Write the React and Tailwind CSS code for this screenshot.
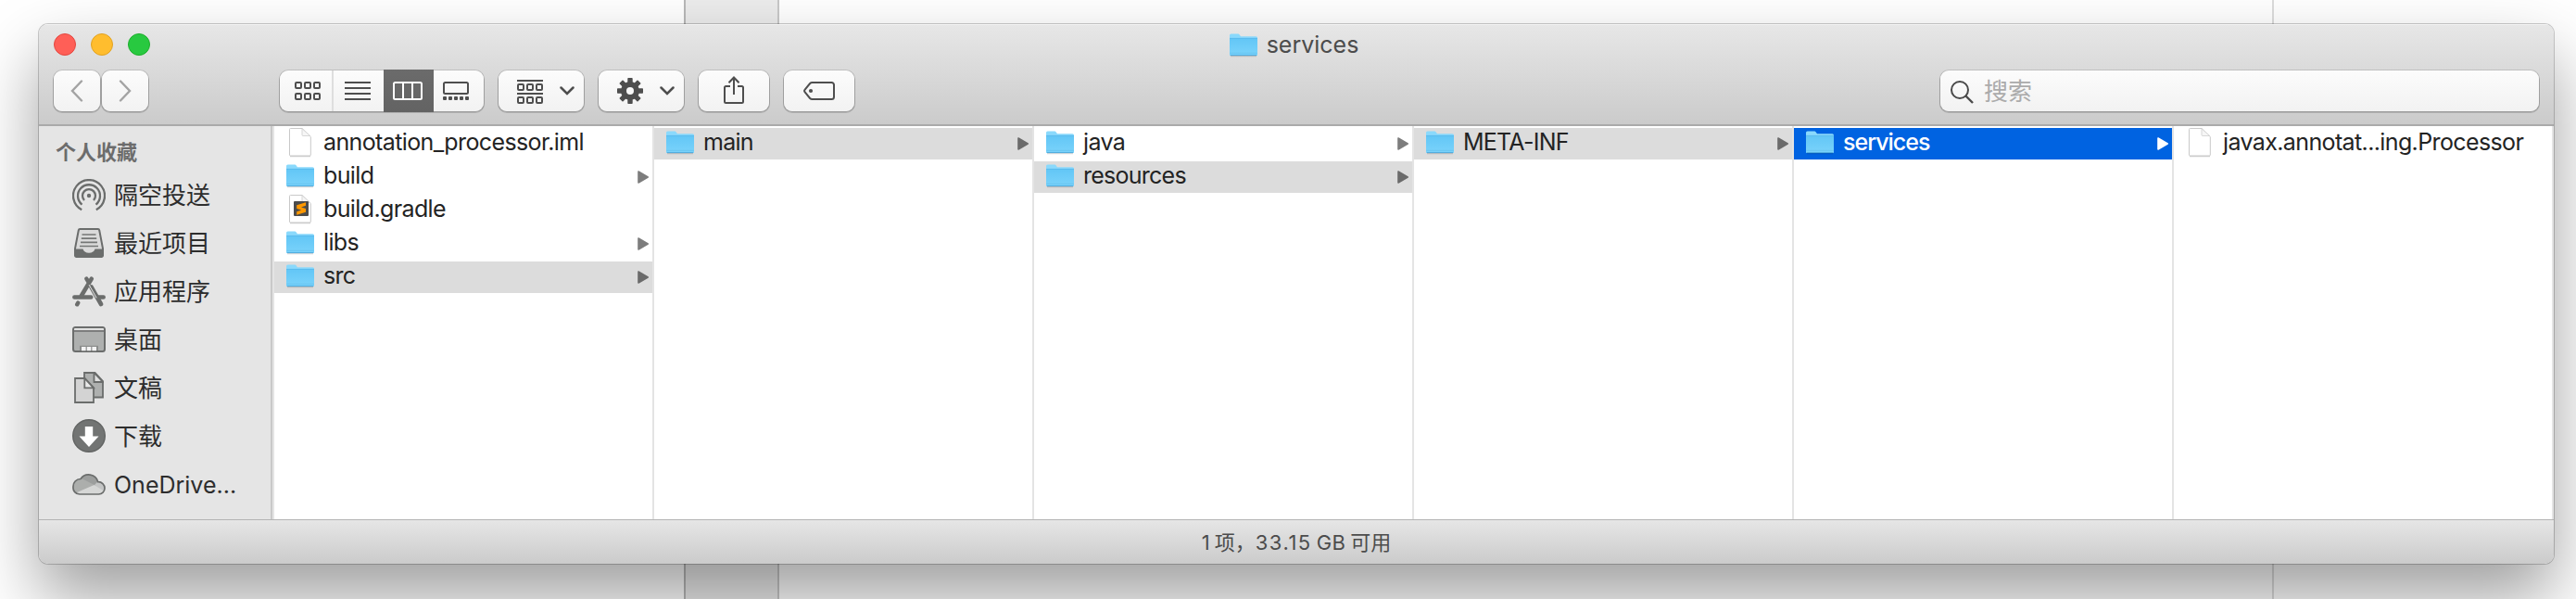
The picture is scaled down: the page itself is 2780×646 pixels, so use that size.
import React from "react";

const FONT =
  "font-['Inter','Noto_Sans_CJK_SC',sans-serif]";

/* ---------- file icons ---------- */

function Folder() {
  return (
    <svg width="32" height="27" viewBox="0 0 32 27" className="block shrink-0">
      <defs>
        <linearGradient id="folderFront" x1="0" y1="0" x2="0" y2="1">
          <stop offset="0" stopColor="#62c6f6" />
          <stop offset="1" stopColor="#7ad3fb" />
        </linearGradient>
      </defs>
      <path d="M2 25.6h28" stroke="#000" strokeOpacity="0.14" strokeWidth="1.4" />
      <path d="M1 3a1.6 1.6 0 0 1 1.6-1.6h7.2c.9 0 1.4.3 1.9 1l1.3 1.8h16.4A1.6 1.6 0 0 1 31 5.8V23.4A1.6 1.6 0 0 1 29.4 25H2.6A1.6 1.6 0 0 1 1 23.4z" fill="#8ad9fc" />
      <path d="M1 6.2h30V23.4A1.6 1.6 0 0 1 29.4 25H2.6A1.6 1.6 0 0 1 1 23.4z" fill="url(#folderFront)" />
      <path d="M1 6.4h30" stroke="#55b6ea" strokeWidth="0.8" />
      <path d="M1.2 22.3h29.6" stroke="#63bfee" strokeWidth="0.7" />
      <path d="M1.8 24.6h28.4" stroke="#4fa9dc" strokeWidth="1" />
    </svg>
  );
}

function FileIcon({ sublime }) {
  return (
    <svg width="26" height="33" viewBox="0 0 26 33" className="block shrink-0">
      <path d="M2 31.6h22" stroke="#000" strokeOpacity="0.18" strokeWidth="1.2" />
      <path d="M2.500 1.500h12.500L24.300 10.500V30a1 1 0 0 1-1 1H2.500a1 1 0 0 1-1-1V2.500a1 1 0 0 1 1-1z" fill="#fff" stroke="#c9c9c9" />
      <path d="M15 1.800V8.500a1 1 0 0 0 1 1h7.800z" fill="#f6f6f6" stroke="#d2d2d2" strokeWidth="0.9" />
      {sublime && (
        <>
          <rect x="6" y="8" width="16" height="16" rx="1" fill="#4c4c4c" />
          <path d="M19 9.200v3.600l-5 1.600 5 1.600v3.700L9.200 22.800v-3.600l5-1.600-5-1.600v-3.700z" fill="#ff9800" />
        </>
      )}
    </svg>
  );
}

function Triangle({ className }) {
  return (
    <svg width="12" height="14" viewBox="0 0 12 14" className={className}>
      <path d="M1 1v12L11.200 7z" fill="currentColor" stroke="currentColor" strokeWidth="1.6" strokeLinejoin="round" />
    </svg>
  );
}

/* ---------- toolbar icons ---------- */

function Squares({ y }) {
  return (
    <g fill="none" stroke="#4e4e4e" strokeWidth="2">
      <rect x="1" y={y} width="6" height="6" rx="1" />
      <rect x="11" y={y} width="6" height="6" rx="1" />
      <rect x="21" y={y} width="6" height="6" rx="1" />
    </g>
  );
}

function Chevron() {
  return (
    <svg width="16" height="10" viewBox="0 0 16 10">
      <path d="M1.500 1.500L8 8l6.500-6.500" fill="none" stroke="#4e4e4e" strokeWidth="2.5" strokeLinecap="round" />
    </svg>
  );
}

const BTN =
  "flex h-11 items-center rounded-[9px] bg-linear-to-b from-[#fcfcfc] to-[#f2f2f2] shadow-[0_0_0_1px_rgba(0,0,0,0.12),0_1px_0_1px_rgba(0,0,0,0.14)]";

function Toolbar() {
  return (
    <div className="flex h-11 items-center px-4">
      <div className="flex gap-0.5">
        <div className={`${BTN} w-[50px] justify-center`}>
          <svg width="14" height="24" viewBox="0 0 14 24">
            <path d="M12 1.500L2 12l10 10.500" fill="none" stroke="#a3a3a3" strokeWidth="2.4" strokeLinecap="round" />
          </svg>
        </div>
        <div className={`${BTN} w-[50px] justify-center`}>
          <svg width="14" height="24" viewBox="0 0 14 24">
            <path d="M2 1.500L12 12 2 22.500" fill="none" stroke="#a3a3a3" strokeWidth="2.4" strokeLinecap="round" />
          </svg>
        </div>
      </div>

      <div className={`${BTN} ml-[142px] w-[220px]`}>
        <div className="flex h-full w-[58px] items-center border-r-2 border-[#dedede] pl-4">
          <svg width="28" height="20" viewBox="0 0 28 20">
            <Squares y={1} />
            <Squares y={13} />
          </svg>
        </div>
        <div className="flex h-full w-[54px] items-center pl-3">
          <svg width="28" height="20" viewBox="0 0 28 20">
            <path d="M0 1h28M0 7h28M0 13h28M0 19h28" stroke="#4e4e4e" strokeWidth="2" />
          </svg>
        </div>
        <div className="flex h-[46px] w-[54px] shrink-0 items-center justify-center bg-linear-to-b from-[#6b6b6b] to-[#636363] pr-0.5">
          <svg width="32" height="20" viewBox="0 0 32 20">
            <rect x="1" y="1" width="30" height="18" rx="1.5" fill="none" stroke="#fff" strokeWidth="2" />
            <path d="M11 1v18M21 1v18" stroke="#fff" strokeWidth="2" />
          </svg>
        </div>
        <div className="flex h-full w-[54px] items-center pl-[10px]">
          <svg width="28" height="20" viewBox="0 0 28 20">
            <rect x="1" y="1" width="26" height="12" rx="1.5" fill="none" stroke="#4e4e4e" strokeWidth="2" />
            <g fill="#4e4e4e">
              <rect x="0" y="16" width="4" height="4" rx="1" />
              <rect x="6" y="16" width="4" height="4" rx="1" />
              <rect x="12" y="16" width="4" height="4" rx="1" />
              <rect x="18" y="16" width="4" height="4" rx="1" />
              <rect x="24" y="16" width="4" height="4" rx="1" />
            </g>
          </svg>
        </div>
      </div>

      <div className={`${BTN} ml-4 w-[92px] justify-between pr-[10px] pl-5`}>
        <svg width="28" height="26" viewBox="0 0 28 26" className="mt-0.5">
          <path d="M0 1h28M0 15h28" stroke="#4e4e4e" strokeWidth="2" />
          <Squares y={5} />
          <Squares y={19} />
        </svg>
        <Chevron />
      </div>

      <div className={`${BTN} ml-4 w-[92px] justify-between pr-[10px] pl-5`}>
        <svg width="28" height="28" viewBox="-14 -14 28 28">
          <g fill="#4e4e4e">
            {[0, 45, 90, 135].map((a) => (
              <rect key={a} x="-2.7" y="-14" width="5.4" height="28" rx="0.8" transform={`rotate(${a})`} />
            ))}
            <circle r="10" />
          </g>
          <circle r="4" fill="#f8f8f8" />
        </svg>
        <Chevron />
      </div>

      <div className={`${BTN} ml-4 w-[76px] justify-center pb-0.5`}>
        <svg width="22" height="30" viewBox="0 0 22 30" fill="none" stroke="#4e4e4e" strokeWidth="2">
          <path d="M7 11H2.500A1.500 1.500 0 0 0 1 12.500v15A1.500 1.500 0 0 0 2.500 29h17a1.500 1.500 0 0 0 1.500-1.500v-15a1.500 1.500 0 0 0-1.500-1.500H15" />
          <path d="M11 20V1.500M5.500 7.300L11 1.500l5.500 5.800" />
        </svg>
      </div>

      <div className={`${BTN} ml-4 w-[76px] justify-center`}>
        <svg width="34" height="20" viewBox="0 0 34 20">
          <path d="M9.500 1H30.500A2.500 2.500 0 0 1 33 3.500v13a2.500 2.500 0 0 1-2.500 2.500H9.500c-1 0-1.700-.3-2.400-1L1.700 11.400c-.8-.9-.8-1.900 0-2.800L7.100 2c.7-.7 1.400-1 2.400-1z" fill="none" stroke="#4e4e4e" strokeWidth="2" />
          <circle cx="8" cy="10" r="2.1" fill="#4e4e4e" />
        </svg>
      </div>

      <div className={`${BTN} ml-auto w-[646px] gap-[11px] pl-[10px]`}>
        <svg width="26" height="26" viewBox="0 0 26 26" className="mt-0.5">
          <circle cx="11" cy="11" r="9" fill="none" stroke="#4a4a4a" strokeWidth="2" />
          <path d="M17.500 17.500L25 25" stroke="#4a4a4a" strokeWidth="2.4" />
        </svg>
        <span className="pt-0.5 text-[26px] leading-none text-[#ababab]">搜索</span>
      </div>
    </div>
  );
}

/* ---------- sidebar ---------- */

function AirDropIcon() {
  return (
    <svg width="36" height="36" viewBox="0 0 36 36" fill="none" stroke="#6b6d6c" strokeWidth="2.3">
      <path d="M10.200 33.200A17 17 0 1 1 25.800 33.200" />
      <path d="M10.500 27.600A12 12 0 1 1 25.500 27.600" />
      <path d="M13 23A7 7 0 1 1 23 23" />
      <circle cx="18" cy="18" r="2.2" fill="#6b6d6c" stroke="none" />
    </svg>
  );
}

function RecentsIcon() {
  return (
    <svg width="32" height="32" viewBox="0 0 32 32" className="mb-0.5">
      <path d="M6.300 1h19.400a1.500 1.500 0 0 1 1.500 1.200L31 22v7.500a1.500 1.500 0 0 1-1.500 1.500h-27A1.500 1.500 0 0 1 1 29.500V22L4.800 2.200A1.500 1.500 0 0 1 6.300 1z" fill="#dadada" stroke="#6b6d6c" strokeWidth="2" />
      <path d="M1 22.500h8.500c.6 2.500 3 4.300 6.500 4.300s5.900-1.800 6.500-4.300H31V31H1z" fill="#6b6d6c" />
      <path d="M8.500 7h15M7.800 11.200h16.400M7 15.300h18M6 19.500h20" stroke="#757776" strokeWidth="1.7" />
    </svg>
  );
}

function AppsIcon() {
  return (
    <svg width="36" height="34" viewBox="0 0 36 34" fill="none" stroke="#6b6d6c" strokeLinecap="round" className="mb-0.5">
      <path d="M2.300 23.500h18" strokeWidth="4.4" />
      <path d="M28.500 23.500h5.200" strokeWidth="4.4" />
      <path d="M20.800 3.600L9.800 22" strokeWidth="4.6" />
      <path d="M6.200 29.600l-1 1.700" strokeWidth="4.4" />
      <path d="M15.300 3.600l1.900 3" strokeWidth="4.4" />
      <path d="M20.500 12.500L31 31" strokeWidth="4.6" />
      <path d="M18.300 10.500L26 24" stroke="#e6e6e6" strokeWidth="1" />
    </svg>
  );
}

function DesktopIcon() {
  return (
    <svg width="36" height="28" viewBox="0 0 36 28" className="mb-0.5">
      <rect x="1" y="1" width="34" height="26" rx="2.5" fill="#aeb0af" stroke="#6b6d6c" strokeWidth="2" />
      <path d="M2 4.200V3a1 1 0 0 1 1-1h30a1 1 0 0 1 1 1v1.200z" fill="#e2e2e2" />
      <path d="M1 4.900h34" stroke="#6b6d6c" strokeWidth="1.5" />
      <path d="M8 20.800h20V26H8z" fill="#8b8d8c" />
      <path d="M10 22h4.600v4.200H10zM15.800 22h4.400v4.200h-4.400zM21.400 22H26v4.200h-4.600z" fill="#f3f3f3" />
    </svg>
  );
}

function DocumentsIcon() {
  return (
    <svg width="32" height="34" viewBox="0 0 32 34" stroke="#6b6d6c" strokeWidth="1.8" className="mb-0.5">
      <path d="M11 1h11.500L31 10v17.500H11z" fill="#aeb0af" />
      <path d="M21.500 1v10H31z" fill="#e0e0e0" />
      <path d="M1 7h10.500L21 17v16H1z" fill="#d3d3d3" />
      <path d="M11.300 7v10.300H21z" fill="#e9e9e9" />
    </svg>
  );
}

function DownloadsIcon() {
  return (
    <svg width="36" height="36" viewBox="0 0 36 36" className="mb-0.5">
      <circle cx="18" cy="18" r="17.3" fill="#727473" stroke="#626463" strokeWidth="1.4" />
      <path d="M13.800 8h8.400v10.500h6.300L18 30 7.500 18.500h6.300z" fill="#fff" />
    </svg>
  );
}

function CloudIcon() {
  return (
    <svg width="36" height="24" viewBox="0 0 36 24" className="mb-0.5">
      <defs>
        <clipPath id="cloudShape">
          <path d="M8 23A7 7 0 0 1 1 15 8 8 0 0 1 9 6.500 10.500 10.500 0 0 1 27.800 9.700 6.800 6.800 0 0 1 35 16.500 6.500 6.500 0 0 1 28.500 23z" />
        </clipPath>
      </defs>
      <g clipPath="url(#cloudShape)">
        <path d="M0 0h36v24H0z" fill="#9c9e9d" />
        <path d="M0 6l11 .5L24 13 4 24H0z" fill="#acaeac" />
        <path d="M24 13l4-4 8 2v12l-6 1z" fill="#c4c5c5" />
        <path d="M4 21.500L23.500 13 35 20v4H4z" fill="#d6d7d6" />
      </g>
      <path d="M8 23A7 7 0 0 1 1 15 8 8 0 0 1 9 6.500 10.500 10.500 0 0 1 27.800 9.700 6.800 6.800 0 0 1 35 16.500 6.500 6.500 0 0 1 28.500 23z" fill="none" stroke="#6b6d6c" strokeWidth="1.7" />
    </svg>
  );
}

const PLACES = [
  { name: "隔空投送", Icon: AirDropIcon },
  { name: "最近项目", Icon: RecentsIcon },
  { name: "应用程序", Icon: AppsIcon },
  { name: "桌面", Icon: DesktopIcon },
  { name: "文稿", Icon: DocumentsIcon },
  { name: "下载", Icon: DownloadsIcon },
  { name: "OneDrive...", Icon: CloudIcon, size: "text-[25px]" },
];

function Sidebar() {
  return (
    <aside className="flex w-[252px] shrink-0 flex-col border-r-2 border-[#c9c9c9] bg-[#e5e5e5]">
      <div className="flex h-[49px] items-center pt-[7px] pl-[18px] text-[22px] leading-none font-bold text-[#6c6c6c]">
        个人收藏
      </div>
      {PLACES.map(({ name, Icon, size = "text-[26px]" }) => (
        <div key={name} className="flex h-[52px] items-center pl-9">
          <div className="flex w-9 justify-center">
            <Icon />
          </div>
          <span className={`pl-[9px] leading-none whitespace-nowrap text-[#2d2d2d] ${size}`}>{name}</span>
        </div>
      ))}
    </aside>
  );
}

/* ---------- columns ---------- */

const COLUMNS = [
  [
    { name: "annotation_processor.iml", kind: "file" },
    { name: "build", kind: "folder" },
    { name: "build.gradle", kind: "sublime" },
    { name: "libs", kind: "folder" },
    { name: "src", kind: "folder", state: "path" },
  ],
  [{ name: "main", kind: "folder", state: "path" }],
  [
    { name: "java", kind: "folder" },
    { name: "resources", kind: "folder", state: "path" },
  ],
  [{ name: "META-INF", kind: "folder", state: "path" }],
  [{ name: "services", kind: "folder", state: "active" }],
  [{ name: "javax.annotat...ing.Processor", kind: "file" }],
];

const ROW_STATE = {
  path: "bg-[#dcdcdc] tracking-[-0.75px] text-[#232323]",
  active: "bg-[#0063e1] font-medium tracking-[-1px] text-white",
  none: "tracking-[-0.62px] text-[#232323]",
};

const TRIANGLE_STATE = {
  path: "text-[#6b6b6b]",
  active: "text-white",
  none: "text-[#7d7d7d]",
};

function Row({ name, kind, state = "none" }) {
  return (
    <div className={`flex h-[34px] items-center pr-1 pl-3 ${ROW_STATE[state]}`}>
      <div className="-mt-[3px] flex w-8 justify-center">
        {kind === "folder" ? <Folder /> : <FileIcon sublime={kind === "sublime"} />}
      </div>
      <span className="mb-1 grow pl-[9px] text-[25px] leading-[30px] whitespace-nowrap">{name}</span>
      {kind === "folder" && <Triangle className={TRIANGLE_STATE[state]} />}
    </div>
  );
}

function Columns() {
  return (
    <div className="flex grow border-l-2 border-[#e4e4e4] bg-white">
      {COLUMNS.map((rows) => (
        <div key={rows[0].name} className="flex w-[410px] flex-col gap-0.5 border-r-2 border-[#e4e4e4] pt-0.5">
          {rows.map((row) => (
            <Row key={row.name} {...row} />
          ))}
        </div>
      ))}
    </div>
  );
}

export default function App() {
  return (
    <div className={`grid h-[646px] w-[2780px] overflow-hidden bg-white ${FONT}`}>
      <div className="flex [grid-area:1/1]">
        <div className="w-[738px]" />
        <div className="w-[103px] border-x-2 border-l-[#b8b8b8] border-r-[#c8c8c8] bg-[#ececec]" />
        <div className="w-[1611px]" />
        <div className="w-0.5 bg-[#dcdcdc]" />
      </div>

      <div className="relative mt-[26px] ml-[42px] flex h-[582px] w-[2714px] flex-col overflow-hidden rounded-[10px] shadow-[0_0_0_1px_rgba(0,0,0,0.2),0_36px_72px_rgba(0,0,0,0.38)] [grid-area:1/1]">
        <header className="flex h-[110px] shrink-0 flex-col border-b-2 border-[#aaaaaa] bg-linear-to-b from-[#e7e7e7] to-[#cbcbcb] shadow-[inset_0_1px_0_#f3f3f3]">
          <div className="grid h-[50px] shrink-0 grid-cols-[1fr_auto_1fr] items-start">
            <div className="flex gap-4 pt-[10px] pl-4">
              <i className="size-6 rounded-full border border-[#e2473f] bg-[#ff5f57]" />
              <i className="size-6 rounded-full border border-[#e0a123] bg-[#ffbd2e]" />
              <i className="size-6 rounded-full border border-[#1dad2b] bg-[#28c940]" />
            </div>
            <div className="flex items-center gap-[9px] pt-1 pr-1.5">
              <Folder />
              <span className="text-[25px] leading-9 text-[#4c4c4c]">services</span>
            </div>
          </div>
          <Toolbar />
        </header>

        <main className="flex grow">
          <Sidebar />
          <Columns />
        </main>

        <footer className="flex h-12 shrink-0 items-center justify-center border-t border-[#b4b4b4] bg-linear-to-b from-[#e6e6e6] to-[#cbcbcb] text-[22px] leading-none text-[#4c4c4c]">
          <p className="[word-spacing:-1.2px]">
            1 项，<span className="tracking-[1.5px]">33.15</span> <span className="tracking-[0.3px]">GB</span> 可用
          </p>
        </footer>
      </div>
    </div>
  );
}
